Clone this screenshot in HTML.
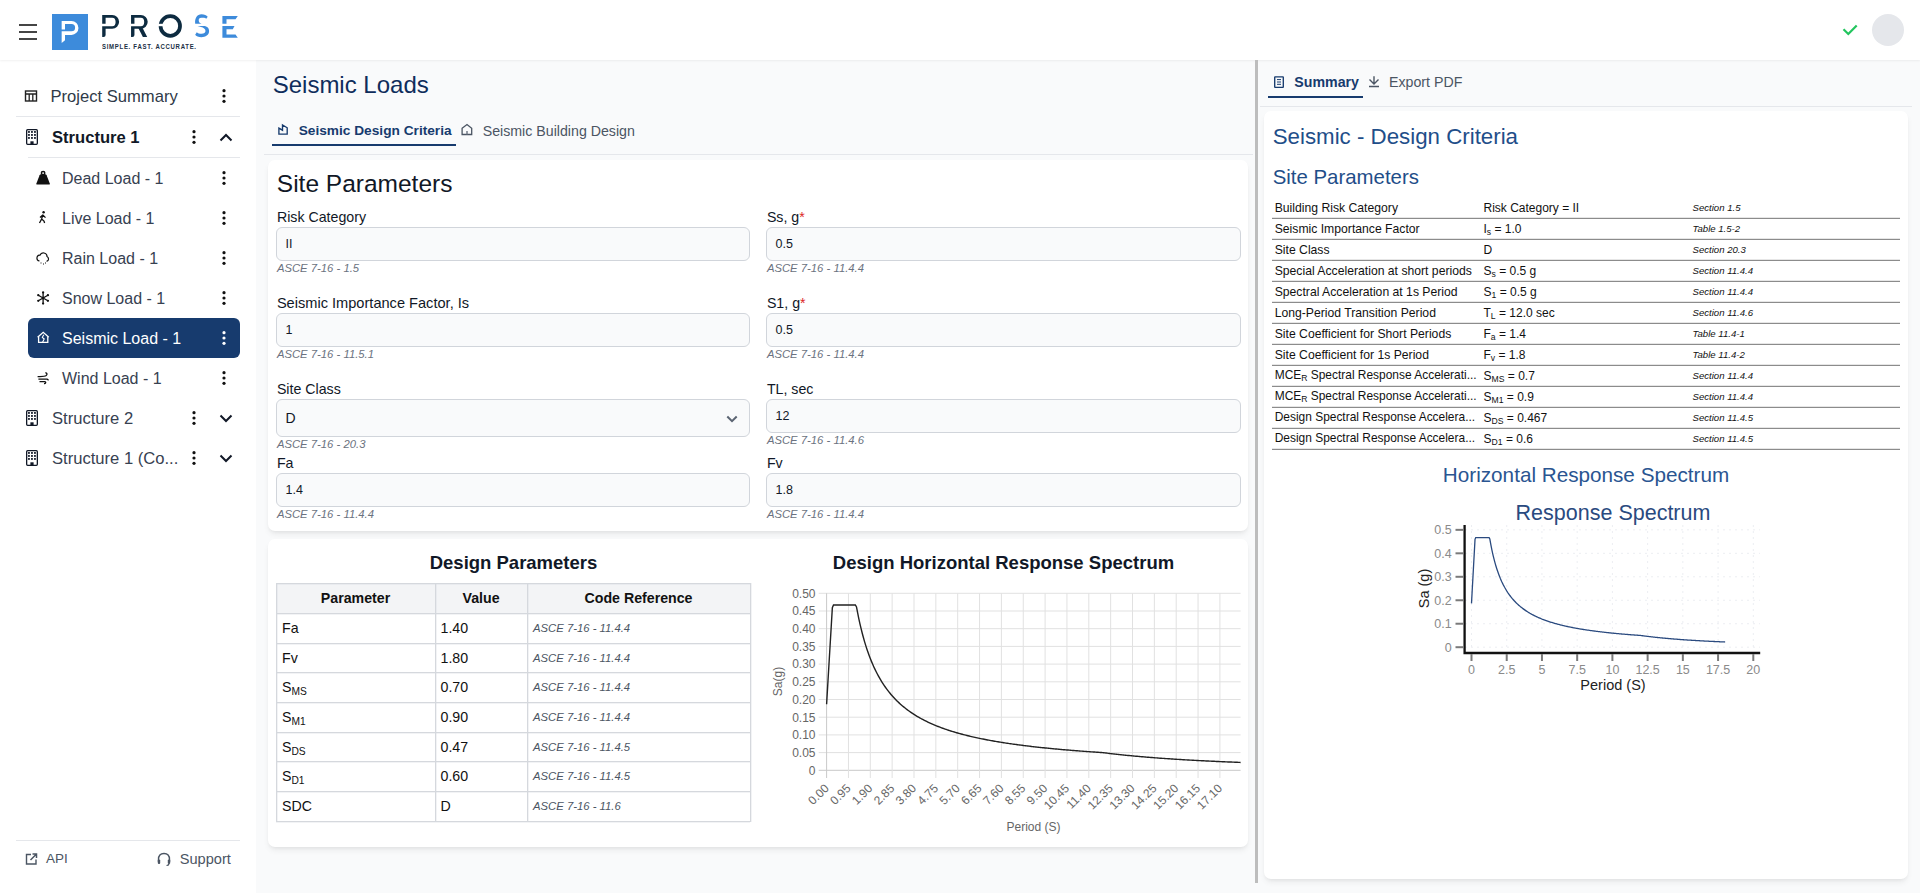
<!DOCTYPE html>
<html><head><meta charset="utf-8"><title>Seismic Loads</title>
<style>
html,body{margin:0;padding:0;width:1920px;height:893px;overflow:hidden;background:#f9fafb;}
body{position:relative;font-family:"Liberation Sans", sans-serif;}
.t{position:absolute;white-space:nowrap;}
.b{position:absolute;}
sub{font-size:0.72em;vertical-align:-0.28em;line-height:0;}
</style></head><body>
<div class="b" style="left:0px;top:0px;width:1920px;height:893px;background:#f9fafb;"></div>
<div class="b" style="left:0px;top:60px;width:256px;height:833px;background:#ffffff;"></div>
<div class="b" style="left:0px;top:0px;width:1920px;height:60px;background:#ffffff;box-shadow:0 1px 2px rgba(0,0,0,0.06);"></div>
<div class="b" style="left:19px;top:24px;width:18px;height:2px;background:#454545;"></div>
<div class="b" style="left:19px;top:31px;width:18px;height:2px;background:#454545;"></div>
<div class="b" style="left:19px;top:38px;width:18px;height:2px;background:#454545;"></div>
<div class="b" style="left:52px;top:14px;width:36px;height:36px;background:#3d8bdb;"></div>
<svg class="b" style="left:52px;top:14px;" width="36" height="36" viewBox="0 0 36 36"><path d="M9.66,7 H19.5 A6.95,6.95 0 0 1 19.5,20.9 H13 V26.2 L9.66,28.9 V17.3 H19.5 A3.6,3.6 0 0 0 19.5,10.1 H13 V15.5 H9.66 Z" fill="#fff"/></svg>
<svg class="b" style="left:0px;top:0px;" width="256" height="60" viewBox="0 0 256 60"><path d="M102.2,14.9 H112.2 A6.9,6.9 0 0 1 112.2,28.75 H105.6 V35 Q105.6,37 103.5,37 H102.2 V26.2 H112.2 A3.4,4.25 0 0 0 112.2,17.7 H105.6 V23.8 H102.2 Z" fill="#0d2b40"/><path d="M131.05,14.9 H140.8 A6.9,6.9 0 0 1 140.8,28.75 H134.45 V35 Q134.45,37 132.3,37 H131.05 V26.2 H140.8 A3.4,4.25 0 0 0 140.8,17.7 H134.45 V23.8 H131.05 Z" fill="#0d2b40"/><path d="M138.3,28 L142.6,28 L147.2,37 H142.9 Z" fill="#0d2b40"/><path d="M181.9,25.95 A11.6,11.75 0 1 0 158.7,25.95 A11.6,11.75 0 1 0 181.9,25.95 Z M178.15,25.95 A7.85,8 0 1 1 162.45,25.95 A7.85,8 0 1 1 178.15,25.95 Z" fill="#0d2b40" fill-rule="evenodd"/><rect x="157.5" y="23.8" width="6" height="2.4" fill="#fff"/><path d="M195.2,23.8 C194.5,18.5 197,14.3 201.5,14.3 C204.5,14.3 206.5,15.3 207.7,16.8 L206.3,18.8 C205,17.5 203.5,17.8 201.5,17.8 C199,17.8 198.5,19.5 198.8,21 C199,22.3 200,23.2 201.5,23.8 Z" fill="#3d8bdb"/><path d="M197.5,25.95 H203.5 C207.5,25.95 209.1,28.5 209.1,31 C209.1,35 205.5,37.2 201.5,37.2 C198.5,37.2 196,36.3 195.2,34.8 L196.8,32.2 C198,33.2 199.5,33.8 201.5,33.8 C204,33.8 205.5,32.5 205.5,31 C205.5,29 203.5,27.5 201,27 Z" fill="#3d8bdb"/><path d="M222.4,15.9 H237.8 L235.5,19.3 H226.5 V23.8 H222.4 Z M222.4,25.95 H234.5 L232.8,29.35 H226.5 V34.4 H235.5 L237.8,37.8 H222.4 Z" fill="#3d8bdb"/></svg>
<div class="t" style="left:102px;top:43px;font-size:8px;line-height:8px;font-weight:bold;color:#1a2e44;letter-spacing:0.95px;transform-origin:0 0;transform:scaleX(0.75);white-space:nowrap">SIMPLE. FAST. ACCURATE.</div>
<svg class="b" style="left:1840px;top:22px;" width="20" height="16" viewBox="0 0 20 16"><path d="M3.5 7.3 L8.3 12 L16.7 3.5" fill="none" stroke="#22c55e" stroke-width="2.2"/></svg>
<div class="b" style="left:1872px;top:14px;width:32px;height:32px;background:#e5e7eb;border-radius:50%;"></div>
<div class="b" style="left:16px;top:116px;width:224px;height:1px;background:#e5e7eb;"></div>
<div class="b" style="left:28px;top:157px;width:212px;height:1px;background:#e5e7eb;"></div>
<div class="b" style="left:28px;top:318px;width:212px;height:40px;background:#173b6e;border-radius:6px;"></div>
<svg class="b" style="left:0px;top:0px;" width="256" height="893" viewBox="0 0 256 893"><circle cx="224" cy="90.7" r="1.6" fill="#111"/><circle cx="224" cy="96" r="1.6" fill="#111"/><circle cx="224" cy="101.3" r="1.6" fill="#111"/><circle cx="194" cy="131.7" r="1.6" fill="#111"/><circle cx="194" cy="137" r="1.6" fill="#111"/><circle cx="194" cy="142.3" r="1.6" fill="#111"/><path d="M220.5 140.5 L226 135 L231.5 140.5" fill="none" stroke="#111827" stroke-width="2"/><circle cx="224" cy="172.7" r="1.6" fill="#111"/><circle cx="224" cy="178" r="1.6" fill="#111"/><circle cx="224" cy="183.3" r="1.6" fill="#111"/><circle cx="224" cy="212.7" r="1.6" fill="#111"/><circle cx="224" cy="218" r="1.6" fill="#111"/><circle cx="224" cy="223.3" r="1.6" fill="#111"/><circle cx="224" cy="252.7" r="1.6" fill="#111"/><circle cx="224" cy="258" r="1.6" fill="#111"/><circle cx="224" cy="263.3" r="1.6" fill="#111"/><circle cx="224" cy="292.7" r="1.6" fill="#111"/><circle cx="224" cy="298" r="1.6" fill="#111"/><circle cx="224" cy="303.3" r="1.6" fill="#111"/><circle cx="224" cy="332.7" r="1.6" fill="#ffffff"/><circle cx="224" cy="338" r="1.6" fill="#ffffff"/><circle cx="224" cy="343.3" r="1.6" fill="#ffffff"/><circle cx="224" cy="372.7" r="1.6" fill="#111"/><circle cx="224" cy="378" r="1.6" fill="#111"/><circle cx="224" cy="383.3" r="1.6" fill="#111"/><circle cx="194" cy="412.7" r="1.6" fill="#111"/><circle cx="194" cy="418" r="1.6" fill="#111"/><circle cx="194" cy="423.3" r="1.6" fill="#111"/><path d="M220.5 415.5 L226 421 L231.5 415.5" fill="none" stroke="#111827" stroke-width="2"/><circle cx="194" cy="452.7" r="1.6" fill="#111"/><circle cx="194" cy="458" r="1.6" fill="#111"/><circle cx="194" cy="463.3" r="1.6" fill="#111"/><path d="M220.5 455.5 L226 461 L231.5 455.5" fill="none" stroke="#111827" stroke-width="2"/><rect x="25.5" y="91" width="11" height="10" fill="none" stroke="#222" stroke-width="1.4"/><path d="M25.5 94 H36.5 M29.2 94 V101 M32.8 94 V101" stroke="#222" stroke-width="1.3"/><rect x="26.65" y="129.65" width="10.7" height="14.7" rx="1" fill="none" stroke="#111827" stroke-width="1.3"/><rect x="28.05" y="131.05" width="1.8" height="1.8" fill="#111827"/><rect x="31.05" y="131.05" width="1.8" height="1.8" fill="#111827"/><rect x="34.05" y="131.05" width="1.8" height="1.8" fill="#111827"/><rect x="28.05" y="134.05" width="1.8" height="1.8" fill="#111827"/><rect x="31.05" y="134.05" width="1.8" height="1.8" fill="#111827"/><rect x="34.05" y="134.05" width="1.8" height="1.8" fill="#111827"/><rect x="28.05" y="137.05" width="1.8" height="1.8" fill="#111827"/><rect x="31.05" y="137.05" width="1.8" height="1.8" fill="#111827"/><rect x="34.05" y="137.05" width="1.8" height="1.8" fill="#111827"/><rect x="30.4" y="141.3" width="3.2" height="3" fill="#111827"/><rect x="26.65" y="410.65" width="10.7" height="14.7" rx="1" fill="none" stroke="#111827" stroke-width="1.3"/><rect x="28.05" y="412.05" width="1.8" height="1.8" fill="#111827"/><rect x="31.05" y="412.05" width="1.8" height="1.8" fill="#111827"/><rect x="34.05" y="412.05" width="1.8" height="1.8" fill="#111827"/><rect x="28.05" y="415.05" width="1.8" height="1.8" fill="#111827"/><rect x="31.05" y="415.05" width="1.8" height="1.8" fill="#111827"/><rect x="34.05" y="415.05" width="1.8" height="1.8" fill="#111827"/><rect x="28.05" y="418.05" width="1.8" height="1.8" fill="#111827"/><rect x="31.05" y="418.05" width="1.8" height="1.8" fill="#111827"/><rect x="34.05" y="418.05" width="1.8" height="1.8" fill="#111827"/><rect x="30.4" y="422.3" width="3.2" height="3" fill="#111827"/><rect x="26.65" y="450.65" width="10.7" height="14.7" rx="1" fill="none" stroke="#111827" stroke-width="1.3"/><rect x="28.05" y="452.05" width="1.8" height="1.8" fill="#111827"/><rect x="31.05" y="452.05" width="1.8" height="1.8" fill="#111827"/><rect x="34.05" y="452.05" width="1.8" height="1.8" fill="#111827"/><rect x="28.05" y="455.05" width="1.8" height="1.8" fill="#111827"/><rect x="31.05" y="455.05" width="1.8" height="1.8" fill="#111827"/><rect x="34.05" y="455.05" width="1.8" height="1.8" fill="#111827"/><rect x="28.05" y="458.05" width="1.8" height="1.8" fill="#111827"/><rect x="31.05" y="458.05" width="1.8" height="1.8" fill="#111827"/><rect x="34.05" y="458.05" width="1.8" height="1.8" fill="#111827"/><rect x="30.4" y="462.3" width="3.2" height="3" fill="#111827"/><path d="M39.6 175.2 Q40 174.3 41 174.3 H45.2 Q46.2 174.3 46.6 175.2 L49.8 183.4 Q50.1 184.6 49 184.6 H37.2 Q36.1 184.6 36.4 183.4 Z" fill="#111"/><circle cx="43.1" cy="173.1" r="1.7" fill="none" stroke="#111" stroke-width="1.5"/><circle cx="43.6" cy="212.3" r="1.2" fill="#111"/><path d="M43 214.5 L41.6 219 L39.5 223 M41.6 219 L44 221 L44.6 223 M42.8 215 L45.5 217.6 M42.8 215 L40 217.5" fill="none" stroke="#111" stroke-width="1.3"/><path d="M39.5 261 Q36.5 260.5 37 257.5 Q37.5 255 40 255.2 Q41 252.5 44 253 Q47 253.5 47 256.5 Q49 257.5 48.3 260 Q47.7 261.3 46.5 261" fill="none" stroke="#111" stroke-width="1.2"/><path d="M41 262.5 v1 M43.5 263.5 v1 M45.5 262.5 v1" stroke="#111" stroke-width="1"/><path d="M43.1 292.5 V303.5 M38.3 295.2 L47.9 300.8 M38.3 300.8 L47.9 295.2" stroke="#111" stroke-width="1.3"/><circle cx="43.1" cy="303.6" r="1.15" fill="#111"/><circle cx="38.25025773880715" cy="300.8" r="1.15" fill="#111"/><circle cx="38.25025773880714" cy="295.2" r="1.15" fill="#111"/><circle cx="43.1" cy="292.4" r="1.15" fill="#111"/><circle cx="47.94974226119285" cy="295.2" r="1.15" fill="#111"/><circle cx="47.94974226119286" cy="300.8" r="1.15" fill="#111"/><circle cx="43.1" cy="298" r="1.3" fill="#111"/><path d="M37.6 337.2 L43.2 332.3 L48.8 337.2 M38.6 336.5 V342.4 H47.8 V336.5" fill="none" stroke="#fff" stroke-width="1.3"/><path d="M43.8 334.8 L42.3 337.3 L44.2 339 L42.6 342.2" fill="none" stroke="#fff" stroke-width="1.1"/><path d="M37.6 376.6 C41 376.6 44.5 376.9 46.2 375.6 C47.6 374.4 47 372.6 45.3 372.9 M38.4 379.2 H47.2 L48.6 380.2 M39.5 381.6 H44.8 C46.3 381.8 45.8 383.8 44 383.6" fill="none" stroke="#111" stroke-width="1.3"/></svg>
<div class="t" style="left:50.50px;top:89.15px;font-size:16.6px;line-height:16.6px;color:#2f3a48;font-weight:normal;font-style:normal;">Project Summary</div>
<div class="t" style="left:52.00px;top:130.15px;font-size:16.6px;line-height:16.6px;color:#111827;font-weight:bold;font-style:normal;">Structure 1</div>
<div class="t" style="left:62.00px;top:171.26px;font-size:16px;line-height:16px;color:#374151;font-weight:normal;font-style:normal;">Dead Load - 1</div>
<div class="t" style="left:62.00px;top:211.26px;font-size:16px;line-height:16px;color:#374151;font-weight:normal;font-style:normal;">Live Load - 1</div>
<div class="t" style="left:62.00px;top:251.26px;font-size:16px;line-height:16px;color:#374151;font-weight:normal;font-style:normal;">Rain Load - 1</div>
<div class="t" style="left:62.00px;top:291.26px;font-size:16px;line-height:16px;color:#374151;font-weight:normal;font-style:normal;">Snow Load - 1</div>
<div class="t" style="left:62.00px;top:331.26px;font-size:16px;line-height:16px;color:#ffffff;font-weight:normal;font-style:normal;">Seismic Load - 1</div>
<div class="t" style="left:62.00px;top:371.26px;font-size:16px;line-height:16px;color:#374151;font-weight:normal;font-style:normal;">Wind Load - 1</div>
<div class="t" style="left:52.00px;top:411.25px;font-size:16.6px;line-height:16.6px;color:#374151;font-weight:normal;font-style:normal;">Structure 2</div>
<div class="t" style="left:52.00px;top:451.25px;font-size:16.6px;line-height:16.6px;color:#374151;font-weight:normal;font-style:normal;">Structure 1 (Co...</div>
<div class="b" style="left:16px;top:840px;width:224px;height:1px;background:#e5e7eb;"></div>
<svg class="b" style="left:0px;top:840px;" width="256" height="40" viewBox="0 0 256 40"><path d="M31 14.5 H26.5 V24 H36 V19.5" fill="none" stroke="#4b5563" stroke-width="1.4"/><path d="M30.5 20 L36 14.5 M32.5 14 H36.5 V18" fill="none" stroke="#4b5563" stroke-width="1.5"/><path d="M158.5 22 V19.5 Q158.5 13.5 164 13.5 Q169.5 13.5 169.5 19.5 V22" fill="none" stroke="#4b5563" stroke-width="1.4"/><rect x="157.8" y="19.5" width="2.4" height="4.5" rx="1" fill="#4b5563"/><rect x="167.8" y="19.5" width="2.4" height="4.5" rx="1" fill="#4b5563"/><path d="M169 24 Q168.5 25.5 166.5 25.5" fill="none" stroke="#4b5563" stroke-width="1.2"/></svg>
<div class="t" style="left:46.00px;top:852.47px;font-size:13.5px;line-height:13.5px;color:#4b5563;font-weight:normal;font-style:normal;">API</div>
<div class="t" style="left:179.70px;top:851.54px;font-size:14.6px;line-height:14.6px;color:#4b5563;font-weight:normal;font-style:normal;">Support</div>
<div class="t" style="left:272.70px;top:72.58px;font-size:24px;line-height:24px;color:#0f2d5c;font-weight:normal;font-style:normal;">Seismic Loads</div>
<svg class="b" style="left:270px;top:118px;" width="210" height="22" viewBox="0 0 210 22"><path d="M8.9 10.1 L12.5 12.2 V6.9 L17.2 9.8 V16.1 H8.9 Z" fill="none" stroke="#173b6e" stroke-width="1.35" stroke-linejoin="miter"/><path d="M192.1 10.3 L197 6.5 L201.7 10.3 V16.5 H192.1 Z" fill="none" stroke="#4b5563" stroke-width="1.3"/><path d="M197 13 V16.5" stroke="#6b7280" stroke-width="1.4"/></svg>
<div class="t" style="left:298.70px;top:124.10px;font-size:13.7px;line-height:13.7px;color:#173b6e;font-weight:bold;font-style:normal;">Seismic Design Criteria</div>
<div class="t" style="left:482.70px;top:123.68px;font-size:14.2px;line-height:14.2px;color:#4b5563;font-weight:normal;font-style:normal;">Seismic Building Design</div>
<div class="b" style="left:272px;top:144px;width:184px;height:2px;background:#173b6e;"></div>
<div class="b" style="left:264px;top:154px;width:989px;height:1px;background:#e5e7eb;"></div>
<div class="b" style="left:268px;top:160px;width:980px;height:371px;background:#fff;border-radius:7px;box-shadow:0 4px 6px -1px rgba(0,0,0,0.07),0 2px 4px -2px rgba(0,0,0,0.07);"></div>
<div class="t" style="left:276.80px;top:171.86px;font-size:24.5px;line-height:24.5px;color:#111827;font-weight:normal;font-style:normal;">Site Parameters</div>
<div class="t" style="left:276.90px;top:209.98px;font-size:14.2px;line-height:14.2px;color:#111827;font-weight:normal;font-style:normal;">Risk Category</div><div class="b" style="left:276px;top:227px;width:474px;height:34px;background:#f9fafb;border:1px solid #d1d5db;border-radius:6px;box-sizing:border-box;"></div><div class="t" style="left:285.50px;top:237.92px;font-size:12.5px;line-height:12.5px;color:#111827;font-weight:normal;font-style:normal;">II</div><div class="t" style="left:276.90px;top:263.03px;font-size:11.3px;line-height:11.3px;color:#6b7280;font-weight:normal;font-style:italic;">ASCE 7-16 - 1.5</div>
<div class="t" style="left:766.90px;top:209.98px;font-size:14.2px;line-height:14.2px;color:#111827;font-weight:normal;font-style:normal;">Ss, g<span style="color:#dc2626">*</span></div><div class="b" style="left:766px;top:227px;width:475px;height:34px;background:#f9fafb;border:1px solid #d1d5db;border-radius:6px;box-sizing:border-box;"></div><div class="t" style="left:775.50px;top:237.92px;font-size:12.5px;line-height:12.5px;color:#111827;font-weight:normal;font-style:normal;">0.5</div><div class="t" style="left:766.90px;top:263.03px;font-size:11.3px;line-height:11.3px;color:#6b7280;font-weight:normal;font-style:italic;">ASCE 7-16 - 11.4.4</div>
<div class="t" style="left:276.90px;top:295.64px;font-size:14.6px;line-height:14.6px;color:#111827;font-weight:normal;font-style:normal;">Seismic Importance Factor, Is</div><div class="b" style="left:276px;top:313px;width:474px;height:34px;background:#f9fafb;border:1px solid #d1d5db;border-radius:6px;box-sizing:border-box;"></div><div class="t" style="left:285.50px;top:323.92px;font-size:12.5px;line-height:12.5px;color:#111827;font-weight:normal;font-style:normal;">1</div><div class="t" style="left:276.90px;top:349.03px;font-size:11.3px;line-height:11.3px;color:#6b7280;font-weight:normal;font-style:italic;">ASCE 7-16 - 11.5.1</div>
<div class="t" style="left:766.90px;top:295.98px;font-size:14.2px;line-height:14.2px;color:#111827;font-weight:normal;font-style:normal;">S1, g<span style="color:#dc2626">*</span></div><div class="b" style="left:766px;top:313px;width:475px;height:34px;background:#f9fafb;border:1px solid #d1d5db;border-radius:6px;box-sizing:border-box;"></div><div class="t" style="left:775.50px;top:323.92px;font-size:12.5px;line-height:12.5px;color:#111827;font-weight:normal;font-style:normal;">0.5</div><div class="t" style="left:766.90px;top:349.03px;font-size:11.3px;line-height:11.3px;color:#6b7280;font-weight:normal;font-style:italic;">ASCE 7-16 - 11.4.4</div>
<div class="t" style="left:276.90px;top:381.78px;font-size:14.2px;line-height:14.2px;color:#111827;font-weight:normal;font-style:normal;">Site Class</div><div class="b" style="left:276px;top:399px;width:474px;height:38px;background:#f9fafb;border:1px solid #d1d5db;border-radius:6px;box-sizing:border-box;"></div><div class="t" style="left:285.50px;top:411.19px;font-size:14px;line-height:14px;color:#111827;font-weight:normal;font-style:normal;">D</div><svg class="b" style="left:724px;top:410px;" width="16" height="16" viewBox="0 0 16 16"><path d="M3.3 6.5 L8 11.2 L12.7 6.5" fill="none" stroke="#5b6472" stroke-width="2"/></svg><div class="t" style="left:276.90px;top:438.73px;font-size:11.3px;line-height:11.3px;color:#6b7280;font-weight:normal;font-style:italic;">ASCE 7-16 - 20.3</div>
<div class="t" style="left:766.90px;top:381.78px;font-size:14.2px;line-height:14.2px;color:#111827;font-weight:normal;font-style:normal;">TL, sec</div><div class="b" style="left:766px;top:399px;width:475px;height:34px;background:#f9fafb;border:1px solid #d1d5db;border-radius:6px;box-sizing:border-box;"></div><div class="t" style="left:775.50px;top:409.92px;font-size:12.5px;line-height:12.5px;color:#111827;font-weight:normal;font-style:normal;">12</div><div class="t" style="left:766.90px;top:435.13px;font-size:11.3px;line-height:11.3px;color:#6b7280;font-weight:normal;font-style:italic;">ASCE 7-16 - 11.4.6</div>
<div class="t" style="left:276.90px;top:455.68px;font-size:14.2px;line-height:14.2px;color:#111827;font-weight:normal;font-style:normal;">Fa</div><div class="b" style="left:276px;top:473px;width:474px;height:34px;background:#f9fafb;border:1px solid #d1d5db;border-radius:6px;box-sizing:border-box;"></div><div class="t" style="left:285.50px;top:483.92px;font-size:12.5px;line-height:12.5px;color:#111827;font-weight:normal;font-style:normal;">1.4</div><div class="t" style="left:276.90px;top:508.83px;font-size:11.3px;line-height:11.3px;color:#6b7280;font-weight:normal;font-style:italic;">ASCE 7-16 - 11.4.4</div>
<div class="t" style="left:766.90px;top:455.68px;font-size:14.2px;line-height:14.2px;color:#111827;font-weight:normal;font-style:normal;">Fv</div><div class="b" style="left:766px;top:473px;width:475px;height:34px;background:#f9fafb;border:1px solid #d1d5db;border-radius:6px;box-sizing:border-box;"></div><div class="t" style="left:775.50px;top:483.92px;font-size:12.5px;line-height:12.5px;color:#111827;font-weight:normal;font-style:normal;">1.8</div><div class="t" style="left:766.90px;top:508.83px;font-size:11.3px;line-height:11.3px;color:#6b7280;font-weight:normal;font-style:italic;">ASCE 7-16 - 11.4.4</div>
<div class="b" style="left:268px;top:539px;width:980px;height:308px;background:#fff;border-radius:7px;box-shadow:0 4px 6px -1px rgba(0,0,0,0.07),0 2px 4px -2px rgba(0,0,0,0.07);"></div>
<div class="t" style="left:13.50px;width:1000px;text-align:center;top:553.54px;font-size:18.5px;line-height:18.5px;color:#111827;font-weight:bold;font-style:normal;">Design Parameters</div>
<div class="t" style="left:503.50px;width:1000px;text-align:center;top:553.54px;font-size:18.5px;line-height:18.5px;color:#111827;font-weight:bold;font-style:normal;">Design Horizontal Response Spectrum</div>
<div class="b" style="left:276px;top:583px;width:474px;height:30px;background:#f3f4f6;"></div>
<svg class="b" style="left:0px;top:0px;pointer-events:none;" width="1920" height="893" viewBox="0 0 1920 893"><rect x="276" y="583" width="474" height="1.3" fill="#d5d8dd"/><rect x="276" y="613" width="474" height="1.3" fill="#d5d8dd"/><rect x="276" y="643" width="474" height="1.3" fill="#d5d8dd"/><rect x="276" y="672" width="474" height="1.3" fill="#d5d8dd"/><rect x="276" y="702" width="474" height="1.3" fill="#d5d8dd"/><rect x="276" y="732" width="474" height="1.3" fill="#d5d8dd"/><rect x="276" y="761" width="474" height="1.3" fill="#d5d8dd"/><rect x="276" y="791" width="474" height="1.3" fill="#d5d8dd"/><rect x="276" y="821" width="474" height="1.3" fill="#d5d8dd"/><rect x="276" y="583" width="1.3" height="239" fill="#d5d8dd"/><rect x="435" y="583" width="1.3" height="239" fill="#d5d8dd"/><rect x="527" y="583" width="1.3" height="239" fill="#d5d8dd"/><rect x="750" y="583" width="1.3" height="239" fill="#d5d8dd"/></svg>
<div class="t" style="left:-144.50px;width:1000px;text-align:center;top:590.88px;font-size:14.2px;line-height:14.2px;color:#111;font-weight:bold;font-style:normal;">Parameter</div>
<div class="t" style="left:-19.00px;width:1000px;text-align:center;top:590.88px;font-size:14.2px;line-height:14.2px;color:#111;font-weight:bold;font-style:normal;">Value</div>
<div class="t" style="left:138.50px;width:1000px;text-align:center;top:590.88px;font-size:14.2px;line-height:14.2px;color:#111;font-weight:bold;font-style:normal;">Code Reference</div>
<div class="t" style="left:282.00px;top:620.78px;font-size:14.2px;line-height:14.2px;color:#111;font-weight:normal;font-style:normal;">Fa</div>
<div class="t" style="left:440.50px;top:620.78px;font-size:14.2px;line-height:14.2px;color:#111;font-weight:normal;font-style:normal;">1.40</div>
<div class="t" style="left:533.00px;top:623.23px;font-size:11.3px;line-height:11.3px;color:#4b5563;font-weight:normal;font-style:italic;">ASCE 7-16 - 11.4.4</div>
<div class="t" style="left:282.00px;top:650.78px;font-size:14.2px;line-height:14.2px;color:#111;font-weight:normal;font-style:normal;">Fv</div>
<div class="t" style="left:440.50px;top:650.78px;font-size:14.2px;line-height:14.2px;color:#111;font-weight:normal;font-style:normal;">1.80</div>
<div class="t" style="left:533.00px;top:653.23px;font-size:11.3px;line-height:11.3px;color:#4b5563;font-weight:normal;font-style:italic;">ASCE 7-16 - 11.4.4</div>
<div class="t" style="left:282.00px;top:679.78px;font-size:14.2px;line-height:14.2px;color:#111;font-weight:normal;font-style:normal;">S<sub>MS</sub></div>
<div class="t" style="left:440.50px;top:679.78px;font-size:14.2px;line-height:14.2px;color:#111;font-weight:normal;font-style:normal;">0.70</div>
<div class="t" style="left:533.00px;top:682.23px;font-size:11.3px;line-height:11.3px;color:#4b5563;font-weight:normal;font-style:italic;">ASCE 7-16 - 11.4.4</div>
<div class="t" style="left:282.00px;top:709.78px;font-size:14.2px;line-height:14.2px;color:#111;font-weight:normal;font-style:normal;">S<sub>M1</sub></div>
<div class="t" style="left:440.50px;top:709.78px;font-size:14.2px;line-height:14.2px;color:#111;font-weight:normal;font-style:normal;">0.90</div>
<div class="t" style="left:533.00px;top:712.23px;font-size:11.3px;line-height:11.3px;color:#4b5563;font-weight:normal;font-style:italic;">ASCE 7-16 - 11.4.4</div>
<div class="t" style="left:282.00px;top:739.78px;font-size:14.2px;line-height:14.2px;color:#111;font-weight:normal;font-style:normal;">S<sub>DS</sub></div>
<div class="t" style="left:440.50px;top:739.78px;font-size:14.2px;line-height:14.2px;color:#111;font-weight:normal;font-style:normal;">0.47</div>
<div class="t" style="left:533.00px;top:742.23px;font-size:11.3px;line-height:11.3px;color:#4b5563;font-weight:normal;font-style:italic;">ASCE 7-16 - 11.4.5</div>
<div class="t" style="left:282.00px;top:768.78px;font-size:14.2px;line-height:14.2px;color:#111;font-weight:normal;font-style:normal;">S<sub>D1</sub></div>
<div class="t" style="left:440.50px;top:768.78px;font-size:14.2px;line-height:14.2px;color:#111;font-weight:normal;font-style:normal;">0.60</div>
<div class="t" style="left:533.00px;top:771.23px;font-size:11.3px;line-height:11.3px;color:#4b5563;font-weight:normal;font-style:italic;">ASCE 7-16 - 11.4.5</div>
<div class="t" style="left:282.00px;top:798.78px;font-size:14.2px;line-height:14.2px;color:#111;font-weight:normal;font-style:normal;">SDC</div>
<div class="t" style="left:440.50px;top:798.78px;font-size:14.2px;line-height:14.2px;color:#111;font-weight:normal;font-style:normal;">D</div>
<div class="t" style="left:533.00px;top:801.23px;font-size:11.3px;line-height:11.3px;color:#4b5563;font-weight:normal;font-style:italic;">ASCE 7-16 - 11.6</div>
<svg class="b" style="left:0px;top:0px;font-family:"Liberation Sans", sans-serif;pointer-events:none;" width="1920" height="893" viewBox="0 0 1920 893"><line x1="818.7" y1="770.30" x2="1240.6" y2="770.30" stroke="#c9c9c9" stroke-width="1"/><text x="815.5" y="774.60" text-anchor="end" font-size="12" fill="#666">0</text><line x1="818.7" y1="752.60" x2="1240.6" y2="752.60" stroke="#e1e1e1" stroke-width="1"/><text x="815.5" y="756.90" text-anchor="end" font-size="12" fill="#666">0.05</text><line x1="818.7" y1="734.90" x2="1240.6" y2="734.90" stroke="#e1e1e1" stroke-width="1"/><text x="815.5" y="739.20" text-anchor="end" font-size="12" fill="#666">0.10</text><line x1="818.7" y1="717.20" x2="1240.6" y2="717.20" stroke="#e1e1e1" stroke-width="1"/><text x="815.5" y="721.50" text-anchor="end" font-size="12" fill="#666">0.15</text><line x1="818.7" y1="699.50" x2="1240.6" y2="699.50" stroke="#e1e1e1" stroke-width="1"/><text x="815.5" y="703.80" text-anchor="end" font-size="12" fill="#666">0.20</text><line x1="818.7" y1="681.80" x2="1240.6" y2="681.80" stroke="#e1e1e1" stroke-width="1"/><text x="815.5" y="686.10" text-anchor="end" font-size="12" fill="#666">0.25</text><line x1="818.7" y1="664.10" x2="1240.6" y2="664.10" stroke="#e1e1e1" stroke-width="1"/><text x="815.5" y="668.40" text-anchor="end" font-size="12" fill="#666">0.30</text><line x1="818.7" y1="646.40" x2="1240.6" y2="646.40" stroke="#e1e1e1" stroke-width="1"/><text x="815.5" y="650.70" text-anchor="end" font-size="12" fill="#666">0.35</text><line x1="818.7" y1="628.70" x2="1240.6" y2="628.70" stroke="#e1e1e1" stroke-width="1"/><text x="815.5" y="633.00" text-anchor="end" font-size="12" fill="#666">0.40</text><line x1="818.7" y1="611.00" x2="1240.6" y2="611.00" stroke="#e1e1e1" stroke-width="1"/><text x="815.5" y="615.30" text-anchor="end" font-size="12" fill="#666">0.45</text><line x1="818.7" y1="593.30" x2="1240.6" y2="593.30" stroke="#e1e1e1" stroke-width="1"/><text x="815.5" y="597.60" text-anchor="end" font-size="12" fill="#666">0.50</text><line x1="826.60" y1="593.30" x2="826.60" y2="778" stroke="#c9c9c9" stroke-width="1"/><text transform="translate(829.60,789) rotate(-45)" text-anchor="end" font-size="12" fill="#666">0.00</text><line x1="848.45" y1="593.30" x2="848.45" y2="778" stroke="#e1e1e1" stroke-width="1"/><text transform="translate(851.45,789) rotate(-45)" text-anchor="end" font-size="12" fill="#666">0.95</text><line x1="870.30" y1="593.30" x2="870.30" y2="778" stroke="#e1e1e1" stroke-width="1"/><text transform="translate(873.30,789) rotate(-45)" text-anchor="end" font-size="12" fill="#666">1.90</text><line x1="892.15" y1="593.30" x2="892.15" y2="778" stroke="#e1e1e1" stroke-width="1"/><text transform="translate(895.15,789) rotate(-45)" text-anchor="end" font-size="12" fill="#666">2.85</text><line x1="914.00" y1="593.30" x2="914.00" y2="778" stroke="#e1e1e1" stroke-width="1"/><text transform="translate(917.00,789) rotate(-45)" text-anchor="end" font-size="12" fill="#666">3.80</text><line x1="935.85" y1="593.30" x2="935.85" y2="778" stroke="#e1e1e1" stroke-width="1"/><text transform="translate(938.85,789) rotate(-45)" text-anchor="end" font-size="12" fill="#666">4.75</text><line x1="957.70" y1="593.30" x2="957.70" y2="778" stroke="#e1e1e1" stroke-width="1"/><text transform="translate(960.70,789) rotate(-45)" text-anchor="end" font-size="12" fill="#666">5.70</text><line x1="979.55" y1="593.30" x2="979.55" y2="778" stroke="#e1e1e1" stroke-width="1"/><text transform="translate(982.55,789) rotate(-45)" text-anchor="end" font-size="12" fill="#666">6.65</text><line x1="1001.40" y1="593.30" x2="1001.40" y2="778" stroke="#e1e1e1" stroke-width="1"/><text transform="translate(1004.40,789) rotate(-45)" text-anchor="end" font-size="12" fill="#666">7.60</text><line x1="1023.25" y1="593.30" x2="1023.25" y2="778" stroke="#e1e1e1" stroke-width="1"/><text transform="translate(1026.25,789) rotate(-45)" text-anchor="end" font-size="12" fill="#666">8.55</text><line x1="1045.10" y1="593.30" x2="1045.10" y2="778" stroke="#e1e1e1" stroke-width="1"/><text transform="translate(1048.10,789) rotate(-45)" text-anchor="end" font-size="12" fill="#666">9.50</text><line x1="1066.95" y1="593.30" x2="1066.95" y2="778" stroke="#e1e1e1" stroke-width="1"/><text transform="translate(1069.95,789) rotate(-45)" text-anchor="end" font-size="12" fill="#666">10.45</text><line x1="1088.80" y1="593.30" x2="1088.80" y2="778" stroke="#e1e1e1" stroke-width="1"/><text transform="translate(1091.80,789) rotate(-45)" text-anchor="end" font-size="12" fill="#666">11.40</text><line x1="1110.65" y1="593.30" x2="1110.65" y2="778" stroke="#e1e1e1" stroke-width="1"/><text transform="translate(1113.65,789) rotate(-45)" text-anchor="end" font-size="12" fill="#666">12.35</text><line x1="1132.50" y1="593.30" x2="1132.50" y2="778" stroke="#e1e1e1" stroke-width="1"/><text transform="translate(1135.50,789) rotate(-45)" text-anchor="end" font-size="12" fill="#666">13.30</text><line x1="1154.35" y1="593.30" x2="1154.35" y2="778" stroke="#e1e1e1" stroke-width="1"/><text transform="translate(1157.35,789) rotate(-45)" text-anchor="end" font-size="12" fill="#666">14.25</text><line x1="1176.20" y1="593.30" x2="1176.20" y2="778" stroke="#e1e1e1" stroke-width="1"/><text transform="translate(1179.20,789) rotate(-45)" text-anchor="end" font-size="12" fill="#666">15.20</text><line x1="1198.05" y1="593.30" x2="1198.05" y2="778" stroke="#e1e1e1" stroke-width="1"/><text transform="translate(1201.05,789) rotate(-45)" text-anchor="end" font-size="12" fill="#666">16.15</text><line x1="1219.90" y1="593.30" x2="1219.90" y2="778" stroke="#e1e1e1" stroke-width="1"/><text transform="translate(1222.90,789) rotate(-45)" text-anchor="end" font-size="12" fill="#666">17.10</text><polyline points="826.60,704.17 827.75,684.87 828.90,665.57 830.05,646.27 831.20,626.97 832.35,607.67 833.50,604.98 834.65,604.98 835.80,604.98 836.95,604.98 838.10,604.98 839.25,604.98 840.40,604.98 841.55,604.98 842.70,604.98 843.85,604.98 845.00,604.98 846.15,604.98 847.30,604.98 848.45,604.98 849.60,604.98 850.75,604.98 851.90,604.98 853.05,604.98 854.20,604.98 855.35,604.98 856.50,606.92 857.65,612.97 858.80,618.59 859.95,623.82 861.10,628.70 862.25,633.27 863.40,637.55 864.55,641.57 865.70,645.36 866.85,648.93 868.00,652.30 869.15,655.49 870.30,658.51 871.45,661.38 872.60,664.10 873.75,666.69 874.90,669.16 876.05,671.51 877.20,673.75 878.35,675.90 879.50,677.95 880.65,679.92 881.80,681.80 882.95,683.61 884.10,685.34 885.25,687.01 886.40,688.61 887.55,690.15 888.70,691.63 889.85,693.06 891.00,694.44 892.15,695.77 893.30,697.06 894.45,698.30 895.60,699.50 896.75,700.66 897.90,701.78 899.05,702.87 900.20,703.92 901.35,704.95 902.50,705.94 903.65,706.90 904.80,707.83 905.95,708.73 907.10,709.61 908.25,710.47 909.40,711.30 910.55,712.11 911.70,712.89 912.85,713.66 914.00,714.41 915.15,715.13 916.30,715.84 917.45,716.53 918.60,717.20 919.75,717.86 920.90,718.50 922.05,719.12 923.20,719.73 924.35,720.32 925.50,720.90 926.65,721.47 927.80,722.03 928.95,722.57 930.10,723.10 931.25,723.62 932.40,724.13 933.55,724.62 934.70,725.11 935.85,725.58 937.00,726.05 938.15,726.51 939.30,726.95 940.45,727.39 941.60,727.82 942.75,728.24 943.90,728.65 945.05,729.06 946.20,729.45 947.35,729.84 948.50,730.22 949.65,730.60 950.80,730.97 951.95,731.33 953.10,731.68 954.25,732.03 955.40,732.37 956.55,732.71 957.70,733.04 958.85,733.36 960.00,733.68 961.15,733.99 962.30,734.30 963.45,734.60 964.60,734.90 965.75,735.19 966.90,735.48 968.05,735.76 969.20,736.04 970.35,736.32 971.50,736.59 972.65,736.85 973.80,737.11 974.95,737.37 976.10,737.62 977.25,737.87 978.40,738.12 979.55,738.36 980.70,738.60 981.85,738.83 983.00,739.06 984.15,739.29 985.30,739.52 986.45,739.74 987.60,739.96 988.75,740.17 989.90,740.38 991.05,740.59 992.20,740.80 993.35,741.00 994.50,741.20 995.65,741.40 996.80,741.60 997.95,741.79 999.10,741.98 1000.25,742.17 1001.40,742.35 1002.55,742.54 1003.70,742.72 1004.85,742.89 1006.00,743.07 1007.15,743.24 1008.30,743.41 1009.45,743.58 1010.60,743.75 1011.75,743.91 1012.90,744.08 1014.05,744.24 1015.20,744.40 1016.35,744.55 1017.50,744.71 1018.65,744.86 1019.80,745.01 1020.95,745.16 1022.10,745.31 1023.25,745.46 1024.40,745.60 1025.55,745.75 1026.70,745.89 1027.85,746.03 1029.00,746.16 1030.15,746.30 1031.30,746.43 1032.45,746.57 1033.60,746.70 1034.75,746.83 1035.90,746.96 1037.05,747.09 1038.20,747.21 1039.35,747.34 1040.50,747.46 1041.65,747.58 1042.80,747.70 1043.95,747.82 1045.10,747.94 1046.25,748.06 1047.40,748.17 1048.55,748.29 1049.70,748.40 1050.85,748.52 1052.00,748.63 1053.15,748.74 1054.30,748.85 1055.45,748.95 1056.60,749.06 1057.75,749.17 1058.90,749.27 1060.05,749.37 1061.20,749.48 1062.35,749.58 1063.50,749.68 1064.65,749.78 1065.80,749.88 1066.95,749.97 1068.10,750.07 1069.25,750.17 1070.40,750.26 1071.55,750.36 1072.70,750.45 1073.85,750.54 1075.00,750.63 1076.15,750.72 1077.30,750.81 1078.45,750.90 1079.60,750.99 1080.75,751.08 1081.90,751.16 1083.05,751.25 1084.20,751.34 1085.35,751.42 1086.50,751.50 1087.65,751.59 1088.80,751.67 1089.95,751.75 1091.10,751.83 1092.25,751.91 1093.40,751.99 1094.55,752.07 1095.70,752.15 1096.85,752.22 1098.00,752.30 1099.15,752.38 1100.30,752.45 1101.45,752.53 1102.60,752.60 1103.75,752.75 1104.90,752.89 1106.05,753.03 1107.20,753.18 1108.35,753.32 1109.50,753.45 1110.65,753.59 1111.80,753.72 1112.95,753.86 1114.10,753.99 1115.25,754.12 1116.40,754.25 1117.55,754.37 1118.70,754.50 1119.85,754.62 1121.00,754.74 1122.15,754.86 1123.30,754.98 1124.45,755.10 1125.60,755.22 1126.75,755.33 1127.90,755.45 1129.05,755.56 1130.20,755.67 1131.35,755.78 1132.50,755.89 1133.65,756.00 1134.80,756.11 1135.95,756.21 1137.10,756.31 1138.25,756.42 1139.40,756.52 1140.55,756.62 1141.70,756.72 1142.85,756.82 1144.00,756.92 1145.15,757.01 1146.30,757.11 1147.45,757.20 1148.60,757.30 1149.75,757.39 1150.90,757.48 1152.05,757.57 1153.20,757.66 1154.35,757.75 1155.50,757.84 1156.65,757.92 1157.80,758.01 1158.95,758.09 1160.10,758.18 1161.25,758.26 1162.40,758.34 1163.55,758.42 1164.70,758.50 1165.85,758.58 1167.00,758.66 1168.15,758.74 1169.30,758.82 1170.45,758.90 1171.60,758.97 1172.75,759.05 1173.90,759.12 1175.05,759.20 1176.20,759.27 1177.35,759.34 1178.50,759.41 1179.65,759.48 1180.80,759.55 1181.95,759.62 1183.10,759.69 1184.25,759.76 1185.40,759.83 1186.55,759.89 1187.70,759.96 1188.85,760.03 1190.00,760.09 1191.15,760.15 1192.30,760.22 1193.45,760.28 1194.60,760.34 1195.75,760.41 1196.90,760.47 1198.05,760.53 1199.20,760.59 1200.35,760.65 1201.50,760.71 1202.65,760.77 1203.80,760.82 1204.95,760.88 1206.10,760.94 1207.25,760.99 1208.40,761.05 1209.55,761.11 1210.70,761.16 1211.85,761.22 1213.00,761.27 1214.15,761.32 1215.30,761.38 1216.45,761.43 1217.60,761.48 1218.75,761.53 1219.90,761.58 1221.05,761.63 1222.20,761.68 1223.35,761.73 1224.50,761.78 1225.65,761.83 1226.80,761.88 1227.95,761.93 1229.10,761.98 1230.25,762.02 1231.40,762.07 1232.55,762.12 1233.70,762.16 1234.85,762.21 1236.00,762.26 1237.15,762.30 1238.30,762.35 1239.45,762.39 1240.60,762.43" fill="none" stroke="#222" stroke-width="1.4" stroke-linejoin="miter"/><text transform="translate(781.5,681.5) rotate(-90)" text-anchor="middle" font-size="12" fill="#666">Sa(g)</text><text x="1033.5" y="830.5" text-anchor="middle" font-size="12" fill="#666">Period (S)</text></svg>
<div class="b" style="left:1255px;top:60px;width:3px;height:823px;background:#bdbdbd;"></div>
<svg class="b" style="left:1260px;top:60px;" width="140" height="40" viewBox="0 0 140 40"><rect x="14.7" y="16.9" width="8.6" height="10.4" rx="0.4" fill="none" stroke="#173b6e" stroke-width="1.35"/><path d="M17 19.6 H21 M17 22 H21 M17 24.3 H21" stroke="#173b6e" stroke-width="1"/><path d="M114 16.2 V23.7 M109.5 19.6 L114 24 L118.5 19.6 M109 26.5 H119" fill="none" stroke="#4b5563" stroke-width="1.4"/></svg>
<div class="t" style="left:1294.30px;top:74.88px;font-size:14.2px;line-height:14.2px;color:#173b6e;font-weight:bold;font-style:normal;">Summary</div>
<div class="t" style="left:1389.00px;top:74.88px;font-size:14.2px;line-height:14.2px;color:#4b5563;font-weight:normal;font-style:normal;">Export PDF</div>
<div class="b" style="left:1268px;top:96px;width:95px;height:2px;background:#173b6e;"></div>
<div class="b" style="left:1260px;top:106px;width:652px;height:1px;background:#e5e7eb;"></div>
<div class="b" style="left:1264px;top:111px;width:644px;height:768px;background:#fff;border-radius:7px;box-shadow:0 4px 6px -1px rgba(0,0,0,0.07),0 2px 4px -2px rgba(0,0,0,0.07);"></div>
<div class="t" style="left:1272.70px;top:126.02px;font-size:22.3px;line-height:22.3px;color:#1f4e89;font-weight:normal;font-style:normal;">Seismic - Design Criteria</div>
<div class="t" style="left:1272.70px;top:166.63px;font-size:20.4px;line-height:20.4px;color:#1f4e89;font-weight:normal;font-style:normal;">Site Parameters</div>
<div class="t" style="left:1274.70px;top:201.57px;font-size:12.2px;line-height:12.2px;color:#111;font-weight:normal;font-style:normal;">Building Risk Category</div>
<div class="t" style="left:1483.50px;top:201.74px;font-size:12.0px;line-height:12.0px;color:#111;font-weight:normal;font-style:normal;">Risk Category = II</div>
<div class="t" style="left:1692.50px;top:203.07px;font-size:9.6px;line-height:9.6px;color:#111;font-weight:normal;font-style:italic;">Section 1.5</div>
<div class="t" style="left:1274.70px;top:222.57px;font-size:12.2px;line-height:12.2px;color:#111;font-weight:normal;font-style:normal;">Seismic Importance Factor</div>
<div class="t" style="left:1483.50px;top:222.74px;font-size:12.0px;line-height:12.0px;color:#111;font-weight:normal;font-style:normal;">I<sub>s</sub> = 1.0</div>
<div class="t" style="left:1692.50px;top:224.07px;font-size:9.6px;line-height:9.6px;color:#111;font-weight:normal;font-style:italic;">Table 1.5-2</div>
<div class="t" style="left:1274.70px;top:243.57px;font-size:12.2px;line-height:12.2px;color:#111;font-weight:normal;font-style:normal;">Site Class</div>
<div class="t" style="left:1483.50px;top:243.74px;font-size:12.0px;line-height:12.0px;color:#111;font-weight:normal;font-style:normal;">D</div>
<div class="t" style="left:1692.50px;top:245.07px;font-size:9.6px;line-height:9.6px;color:#111;font-weight:normal;font-style:italic;">Section 20.3</div>
<div class="t" style="left:1274.70px;top:264.57px;font-size:12.2px;line-height:12.2px;color:#111;font-weight:normal;font-style:normal;">Special Acceleration at short periods</div>
<div class="t" style="left:1483.50px;top:264.74px;font-size:12.0px;line-height:12.0px;color:#111;font-weight:normal;font-style:normal;">S<sub>s</sub> = 0.5 g</div>
<div class="t" style="left:1692.50px;top:266.07px;font-size:9.6px;line-height:9.6px;color:#111;font-weight:normal;font-style:italic;">Section 11.4.4</div>
<div class="t" style="left:1274.70px;top:285.57px;font-size:12.2px;line-height:12.2px;color:#111;font-weight:normal;font-style:normal;">Spectral Acceleration at 1s Period</div>
<div class="t" style="left:1483.50px;top:285.74px;font-size:12.0px;line-height:12.0px;color:#111;font-weight:normal;font-style:normal;">S<sub>1</sub> = 0.5 g</div>
<div class="t" style="left:1692.50px;top:287.07px;font-size:9.6px;line-height:9.6px;color:#111;font-weight:normal;font-style:italic;">Section 11.4.4</div>
<div class="t" style="left:1274.70px;top:306.57px;font-size:12.2px;line-height:12.2px;color:#111;font-weight:normal;font-style:normal;">Long-Period Transition Period</div>
<div class="t" style="left:1483.50px;top:306.74px;font-size:12.0px;line-height:12.0px;color:#111;font-weight:normal;font-style:normal;">T<sub>L</sub> = 12.0 sec</div>
<div class="t" style="left:1692.50px;top:308.07px;font-size:9.6px;line-height:9.6px;color:#111;font-weight:normal;font-style:italic;">Section 11.4.6</div>
<div class="t" style="left:1274.70px;top:327.57px;font-size:12.2px;line-height:12.2px;color:#111;font-weight:normal;font-style:normal;">Site Coefficient for Short Periods</div>
<div class="t" style="left:1483.50px;top:327.74px;font-size:12.0px;line-height:12.0px;color:#111;font-weight:normal;font-style:normal;">F<sub>a</sub> = 1.4</div>
<div class="t" style="left:1692.50px;top:329.07px;font-size:9.6px;line-height:9.6px;color:#111;font-weight:normal;font-style:italic;">Table 11.4-1</div>
<div class="t" style="left:1274.70px;top:348.57px;font-size:12.2px;line-height:12.2px;color:#111;font-weight:normal;font-style:normal;">Site Coefficient for 1s Period</div>
<div class="t" style="left:1483.50px;top:348.74px;font-size:12.0px;line-height:12.0px;color:#111;font-weight:normal;font-style:normal;">F<sub>v</sub> = 1.8</div>
<div class="t" style="left:1692.50px;top:350.07px;font-size:9.6px;line-height:9.6px;color:#111;font-weight:normal;font-style:italic;">Table 11.4-2</div>
<div class="t" style="left:1274.70px;top:369.78px;font-size:11.95px;line-height:11.95px;color:#111;font-weight:normal;font-style:normal;">MCE<sub>R</sub> Spectral Response Accelerati...</div>
<div class="t" style="left:1483.50px;top:369.74px;font-size:12.0px;line-height:12.0px;color:#111;font-weight:normal;font-style:normal;">S<sub>MS</sub> = 0.7</div>
<div class="t" style="left:1692.50px;top:371.07px;font-size:9.6px;line-height:9.6px;color:#111;font-weight:normal;font-style:italic;">Section 11.4.4</div>
<div class="t" style="left:1274.70px;top:390.78px;font-size:11.95px;line-height:11.95px;color:#111;font-weight:normal;font-style:normal;">MCE<sub>R</sub> Spectral Response Accelerati...</div>
<div class="t" style="left:1483.50px;top:390.74px;font-size:12.0px;line-height:12.0px;color:#111;font-weight:normal;font-style:normal;">S<sub>M1</sub> = 0.9</div>
<div class="t" style="left:1692.50px;top:392.07px;font-size:9.6px;line-height:9.6px;color:#111;font-weight:normal;font-style:italic;">Section 11.4.4</div>
<div class="t" style="left:1274.70px;top:411.78px;font-size:11.95px;line-height:11.95px;color:#111;font-weight:normal;font-style:normal;">Design Spectral Response Accelera...</div>
<div class="t" style="left:1483.50px;top:411.74px;font-size:12.0px;line-height:12.0px;color:#111;font-weight:normal;font-style:normal;">S<sub>DS</sub> = 0.467</div>
<div class="t" style="left:1692.50px;top:413.07px;font-size:9.6px;line-height:9.6px;color:#111;font-weight:normal;font-style:italic;">Section 11.4.5</div>
<div class="t" style="left:1274.70px;top:432.78px;font-size:11.95px;line-height:11.95px;color:#111;font-weight:normal;font-style:normal;">Design Spectral Response Accelera...</div>
<div class="t" style="left:1483.50px;top:432.74px;font-size:12.0px;line-height:12.0px;color:#111;font-weight:normal;font-style:normal;">S<sub>D1</sub> = 0.6</div>
<div class="t" style="left:1692.50px;top:434.07px;font-size:9.6px;line-height:9.6px;color:#111;font-weight:normal;font-style:italic;">Section 11.4.5</div>
<svg class="b" style="left:0px;top:0px;pointer-events:none;" width="1920" height="893" viewBox="0 0 1920 893"><rect x="1272" y="217.80" width="628" height="1.1" fill="#808080"/><rect x="1272" y="238.80" width="628" height="1.1" fill="#808080"/><rect x="1272" y="259.80" width="628" height="1.1" fill="#808080"/><rect x="1272" y="280.80" width="628" height="1.1" fill="#808080"/><rect x="1272" y="301.80" width="628" height="1.1" fill="#808080"/><rect x="1272" y="322.80" width="628" height="1.1" fill="#808080"/><rect x="1272" y="343.80" width="628" height="1.1" fill="#808080"/><rect x="1272" y="364.80" width="628" height="1.1" fill="#808080"/><rect x="1272" y="385.80" width="628" height="1.1" fill="#808080"/><rect x="1272" y="406.80" width="628" height="1.1" fill="#808080"/><rect x="1272" y="427.80" width="628" height="1.1" fill="#808080"/><rect x="1272" y="448.80" width="628" height="1.1" fill="#808080"/></svg>
<div class="t" style="left:1086.00px;width:1000px;text-align:center;top:465.28px;font-size:20.7px;line-height:20.7px;color:#2a5591;font-weight:normal;font-style:normal;">Horizontal Response Spectrum</div>
<div class="t" style="left:1113.00px;width:1000px;text-align:center;top:502.50px;font-size:21.5px;line-height:21.5px;color:#2a4a7f;font-weight:normal;font-style:normal;">Response Spectrum</div>
<svg class="b" style="left:0px;top:0px;font-family:"Liberation Sans", sans-serif;pointer-events:none;" width="1920" height="893" viewBox="0 0 1920 893"><line x1="1471.50" y1="525" x2="1471.50" y2="651" stroke="#eceef2" stroke-width="1" stroke-dasharray="2,4"/><line x1="1506.72" y1="525" x2="1506.72" y2="651" stroke="#eceef2" stroke-width="1" stroke-dasharray="2,4"/><line x1="1541.95" y1="525" x2="1541.95" y2="651" stroke="#eceef2" stroke-width="1" stroke-dasharray="2,4"/><line x1="1577.17" y1="525" x2="1577.17" y2="651" stroke="#eceef2" stroke-width="1" stroke-dasharray="2,4"/><line x1="1612.40" y1="525" x2="1612.40" y2="651" stroke="#eceef2" stroke-width="1" stroke-dasharray="2,4"/><line x1="1647.62" y1="525" x2="1647.62" y2="651" stroke="#eceef2" stroke-width="1" stroke-dasharray="2,4"/><line x1="1682.85" y1="525" x2="1682.85" y2="651" stroke="#eceef2" stroke-width="1" stroke-dasharray="2,4"/><line x1="1718.08" y1="525" x2="1718.08" y2="651" stroke="#eceef2" stroke-width="1" stroke-dasharray="2,4"/><line x1="1753.30" y1="525" x2="1753.30" y2="651" stroke="#eceef2" stroke-width="1" stroke-dasharray="2,4"/><line x1="1465" y1="647.20" x2="1760" y2="647.20" stroke="#eceef2" stroke-width="1" stroke-dasharray="2,4"/><line x1="1465" y1="623.73" x2="1760" y2="623.73" stroke="#eceef2" stroke-width="1" stroke-dasharray="2,4"/><line x1="1465" y1="600.26" x2="1760" y2="600.26" stroke="#eceef2" stroke-width="1" stroke-dasharray="2,4"/><line x1="1465" y1="576.79" x2="1760" y2="576.79" stroke="#eceef2" stroke-width="1" stroke-dasharray="2,4"/><line x1="1465" y1="553.32" x2="1760" y2="553.32" stroke="#eceef2" stroke-width="1" stroke-dasharray="2,4"/><line x1="1465" y1="529.85" x2="1760" y2="529.85" stroke="#eceef2" stroke-width="1" stroke-dasharray="2,4"/><polyline points="1471.50,603.36 1472.20,590.56 1472.91,577.77 1473.61,564.97 1474.32,552.17 1475.02,539.38 1475.73,537.60 1476.43,537.60 1477.14,537.60 1477.84,537.60 1478.55,537.60 1479.25,537.60 1479.95,537.60 1480.66,537.60 1481.36,537.60 1482.07,537.60 1482.77,537.60 1483.48,537.60 1484.18,537.60 1484.89,537.60 1485.59,537.60 1486.29,537.60 1487.00,537.60 1487.70,537.60 1488.41,537.60 1489.11,537.60 1489.82,538.88 1490.52,542.89 1491.23,546.61 1491.93,550.08 1492.63,553.32 1493.34,556.35 1494.04,559.19 1494.75,561.85 1495.45,564.36 1496.16,566.73 1496.86,568.97 1497.57,571.08 1498.27,573.08 1498.98,574.98 1499.68,576.79 1500.38,578.51 1501.09,580.14 1501.79,581.70 1502.50,583.19 1503.20,584.61 1503.91,585.97 1504.61,587.28 1505.32,588.53 1506.02,589.72 1506.72,590.87 1507.43,591.98 1508.13,593.04 1508.84,594.06 1509.54,595.04 1510.25,595.99 1510.95,596.91 1511.66,597.79 1512.36,598.64 1513.07,599.46 1513.77,600.26 1514.47,601.03 1515.18,601.77 1515.88,602.50 1516.59,603.19 1517.29,603.87 1518.00,604.53 1518.70,605.16 1519.41,605.78 1520.11,606.38 1520.82,606.97 1521.52,607.53 1522.22,608.08 1522.93,608.62 1523.63,609.14 1524.34,609.65 1525.04,610.14 1525.75,610.62 1526.45,611.09 1527.16,611.55 1527.86,612.00 1528.56,612.43 1529.27,612.85 1529.97,613.27 1530.68,613.67 1531.38,614.07 1532.09,614.45 1532.79,614.83 1533.50,615.20 1534.20,615.56 1534.90,615.91 1535.61,616.25 1536.31,616.59 1537.02,616.92 1537.72,617.24 1538.43,617.55 1539.13,617.86 1539.84,618.16 1540.54,618.46 1541.25,618.75 1541.95,619.04 1542.65,619.31 1543.36,619.59 1544.06,619.86 1544.77,620.12 1545.47,620.38 1546.18,620.63 1546.88,620.88 1547.59,621.12 1548.29,621.36 1548.99,621.60 1549.70,621.83 1550.40,622.05 1551.11,622.28 1551.81,622.49 1552.52,622.71 1553.22,622.92 1553.93,623.13 1554.63,623.33 1555.34,623.53 1556.04,623.73 1556.74,623.92 1557.45,624.11 1558.15,624.30 1558.86,624.49 1559.56,624.67 1560.27,624.85 1560.97,625.02 1561.68,625.20 1562.38,625.37 1563.09,625.54 1563.79,625.70 1564.49,625.86 1565.20,626.02 1565.90,626.18 1566.61,626.34 1567.31,626.49 1568.02,626.64 1568.72,626.79 1569.43,626.94 1570.13,627.08 1570.83,627.23 1571.54,627.37 1572.24,627.50 1572.95,627.64 1573.65,627.78 1574.36,627.91 1575.06,628.04 1575.77,628.17 1576.47,628.30 1577.17,628.42 1577.88,628.55 1578.58,628.67 1579.29,628.79 1579.99,628.91 1580.70,629.03 1581.40,629.15 1582.11,629.26 1582.81,629.37 1583.52,629.49 1584.22,629.60 1584.92,629.71 1585.63,629.81 1586.33,629.92 1587.04,630.03 1587.74,630.13 1588.45,630.23 1589.15,630.34 1589.86,630.44 1590.56,630.53 1591.27,630.63 1591.97,630.73 1592.67,630.83 1593.38,630.92 1594.08,631.01 1594.79,631.11 1595.49,631.20 1596.20,631.29 1596.90,631.38 1597.61,631.47 1598.31,631.55 1599.01,631.64 1599.72,631.73 1600.42,631.81 1601.13,631.89 1601.83,631.98 1602.54,632.06 1603.24,632.14 1603.95,632.22 1604.65,632.30 1605.36,632.38 1606.06,632.45 1606.76,632.53 1607.47,632.61 1608.17,632.68 1608.88,632.76 1609.58,632.83 1610.29,632.90 1610.99,632.98 1611.70,633.05 1612.40,633.12 1613.10,633.19 1613.81,633.26 1614.51,633.33 1615.22,633.39 1615.92,633.46 1616.63,633.53 1617.33,633.59 1618.04,633.66 1618.74,633.72 1619.44,633.79 1620.15,633.85 1620.85,633.92 1621.56,633.98 1622.26,634.04 1622.97,634.10 1623.67,634.16 1624.38,634.22 1625.08,634.28 1625.79,634.34 1626.49,634.40 1627.19,634.46 1627.90,634.51 1628.60,634.57 1629.31,634.63 1630.01,634.68 1630.72,634.74 1631.42,634.79 1632.13,634.85 1632.83,634.90 1633.54,634.95 1634.24,635.01 1634.94,635.06 1635.65,635.11 1636.35,635.16 1637.06,635.22 1637.76,635.27 1638.47,635.32 1639.17,635.37 1639.88,635.42 1640.58,635.47 1641.28,635.56 1641.99,635.66 1642.69,635.75 1643.40,635.85 1644.10,635.94 1644.81,636.03 1645.51,636.12 1646.22,636.21 1646.92,636.30 1647.62,636.39 1648.33,636.47 1649.03,636.56 1649.74,636.64 1650.44,636.72 1651.15,636.80 1651.85,636.89 1652.56,636.97 1653.26,637.05 1653.97,637.12 1654.67,637.20 1655.37,637.28 1656.08,637.35 1656.78,637.43 1657.49,637.50 1658.19,637.57 1658.90,637.65 1659.60,637.72 1660.31,637.79 1661.01,637.86 1661.71,637.93 1662.42,638.00 1663.12,638.06 1663.83,638.13 1664.53,638.20 1665.24,638.26 1665.94,638.33 1666.65,638.39 1667.35,638.45 1668.06,638.52 1668.76,638.58 1669.46,638.64 1670.17,638.70 1670.87,638.76 1671.58,638.82 1672.28,638.88 1672.99,638.94 1673.69,638.99 1674.40,639.05 1675.10,639.11 1675.81,639.16 1676.51,639.22 1677.21,639.27 1677.92,639.33 1678.62,639.38 1679.33,639.43 1680.03,639.49 1680.74,639.54 1681.44,639.59 1682.15,639.64 1682.85,639.69 1683.55,639.74 1684.26,639.79 1684.96,639.84 1685.67,639.89 1686.37,639.93 1687.08,639.98 1687.78,640.03 1688.49,640.07 1689.19,640.12 1689.89,640.17 1690.60,640.21 1691.30,640.26 1692.01,640.30 1692.71,640.34 1693.42,640.39 1694.12,640.43 1694.83,640.47 1695.53,640.52 1696.24,640.56 1696.94,640.60 1697.64,640.64 1698.35,640.68 1699.05,640.72 1699.76,640.76 1700.46,640.80 1701.17,640.84 1701.87,640.88 1702.58,640.92 1703.28,640.96 1703.98,640.99 1704.69,641.03 1705.39,641.07 1706.10,641.10 1706.80,641.14 1707.51,641.18 1708.21,641.21 1708.92,641.25 1709.62,641.28 1710.33,641.32 1711.03,641.35 1711.73,641.39 1712.44,641.42 1713.14,641.45 1713.85,641.49 1714.55,641.52 1715.26,641.55 1715.96,641.59 1716.67,641.62 1717.37,641.65 1718.08,641.68 1718.78,641.71 1719.48,641.74 1720.19,641.78 1720.89,641.81 1721.60,641.84 1722.30,641.87 1723.01,641.90 1723.71,641.93 1724.42,641.96 1725.12,641.98" fill="none" stroke="#2a4a7f" stroke-width="1.3"/><path d="M1464.6 525 V653 H1760.2" fill="none" stroke="#111" stroke-width="2.3"/><line x1="1455.5" y1="647.20" x2="1463.5" y2="647.20" stroke="#7a7a7a" stroke-width="2"/><text x="1451.7" y="651.50" text-anchor="end" font-size="12.5" fill="#8a8a8a">0</text><line x1="1455.5" y1="623.73" x2="1463.5" y2="623.73" stroke="#7a7a7a" stroke-width="2"/><text x="1451.7" y="628.03" text-anchor="end" font-size="12.5" fill="#8a8a8a">0.1</text><line x1="1455.5" y1="600.26" x2="1463.5" y2="600.26" stroke="#7a7a7a" stroke-width="2"/><text x="1451.7" y="604.56" text-anchor="end" font-size="12.5" fill="#8a8a8a">0.2</text><line x1="1455.5" y1="576.79" x2="1463.5" y2="576.79" stroke="#7a7a7a" stroke-width="2"/><text x="1451.7" y="581.09" text-anchor="end" font-size="12.5" fill="#8a8a8a">0.3</text><line x1="1455.5" y1="553.32" x2="1463.5" y2="553.32" stroke="#7a7a7a" stroke-width="2"/><text x="1451.7" y="557.62" text-anchor="end" font-size="12.5" fill="#8a8a8a">0.4</text><line x1="1455.5" y1="529.85" x2="1463.5" y2="529.85" stroke="#7a7a7a" stroke-width="2"/><text x="1451.7" y="534.15" text-anchor="end" font-size="12.5" fill="#8a8a8a">0.5</text><line x1="1471.50" y1="654" x2="1471.50" y2="661" stroke="#7a7a7a" stroke-width="2"/><text x="1471.50" y="673.5" text-anchor="middle" font-size="12.5" fill="#8a8a8a">0</text><line x1="1506.72" y1="654" x2="1506.72" y2="661" stroke="#7a7a7a" stroke-width="2"/><text x="1506.72" y="673.5" text-anchor="middle" font-size="12.5" fill="#8a8a8a">2.5</text><line x1="1541.95" y1="654" x2="1541.95" y2="661" stroke="#7a7a7a" stroke-width="2"/><text x="1541.95" y="673.5" text-anchor="middle" font-size="12.5" fill="#8a8a8a">5</text><line x1="1577.17" y1="654" x2="1577.17" y2="661" stroke="#7a7a7a" stroke-width="2"/><text x="1577.17" y="673.5" text-anchor="middle" font-size="12.5" fill="#8a8a8a">7.5</text><line x1="1612.40" y1="654" x2="1612.40" y2="661" stroke="#7a7a7a" stroke-width="2"/><text x="1612.40" y="673.5" text-anchor="middle" font-size="12.5" fill="#8a8a8a">10</text><line x1="1647.62" y1="654" x2="1647.62" y2="661" stroke="#7a7a7a" stroke-width="2"/><text x="1647.62" y="673.5" text-anchor="middle" font-size="12.5" fill="#8a8a8a">12.5</text><line x1="1682.85" y1="654" x2="1682.85" y2="661" stroke="#7a7a7a" stroke-width="2"/><text x="1682.85" y="673.5" text-anchor="middle" font-size="12.5" fill="#8a8a8a">15</text><line x1="1718.08" y1="654" x2="1718.08" y2="661" stroke="#7a7a7a" stroke-width="2"/><text x="1718.08" y="673.5" text-anchor="middle" font-size="12.5" fill="#8a8a8a">17.5</text><line x1="1753.30" y1="654" x2="1753.30" y2="661" stroke="#7a7a7a" stroke-width="2"/><text x="1753.30" y="673.5" text-anchor="middle" font-size="12.5" fill="#8a8a8a">20</text><text x="1613" y="690.3" text-anchor="middle" font-size="14.5" fill="#222">Period (S)</text><text transform="translate(1428.5,588.5) rotate(-90)" text-anchor="middle" font-size="14.5" fill="#222">Sa (g)</text></svg>
</body></html>
